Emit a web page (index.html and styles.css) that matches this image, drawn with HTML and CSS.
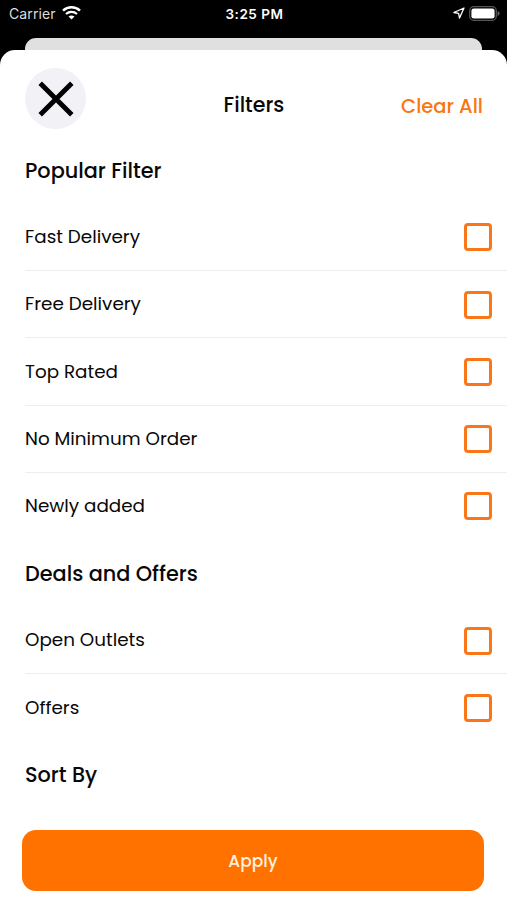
FILE: index.html
```html
<!DOCTYPE html>
<html lang="en">
<head>
<meta charset="utf-8">
<title>Filters</title>
<link rel="stylesheet" href="styles.css">
</head>
<body>
<div class="status">
  <div class="carrier"><span>Carrier</span>
    <svg width="19" height="14" viewBox="0 0 19 14" fill="none" stroke="#fff"><path d="M1 4.600C5.800.2 13.200.2 18 4.600" stroke-width="2.500"/><path d="M4 8c3.100-2.800 7.900-2.800 11 0" stroke-width="2.300"/><path d="M9.500 13.600 6.500 10.600Q9.500 8.200 12.500 10.600Z" fill="#fff" stroke="none"/></svg>
  </div>
  <time>3:25 PM</time>
  <div class="power">
    <svg width="12" height="12" viewBox="0 0 12 12" fill="none" stroke="#fff" stroke-width="1.300" stroke-linejoin="round"><path d="M11 1 .9 5.500l4.700.9.900 4.700Z"/></svg>
    <svg width="31" height="15" viewBox="0 0 31 15"><rect x=".7" y=".7" width="26.600" height="13.600" rx="4" fill="none" stroke="#555" stroke-width="1.300"/><rect x="2.400" y="2.400" width="23.200" height="10.200" rx="2.300" fill="#fff"/><path d="M28.600 5v5q2-.8 2-2.500T28.600 5Z" fill="#666"/></svg>
  </div>
</div>
<div class="back-card"></div>
<main class="sheet">
  <header>
    <button class="close" aria-label="Close"><svg width="36" height="36" viewBox="0 0 36 36"><path d="M2.200 2.200 33.800 33.800M33.800 2.200 2.200 33.800" stroke="#000" stroke-width="4.900"/></svg></button>
    <h1>Filters</h1>
    <button class="clear">Clear All</button>
  </header>
  <section>
    <h2>Popular Filter</h2>
    <label class="row"><span>Fast Delivery</span><i class="box"></i></label>
    <label class="row"><span>Free Delivery</span><i class="box"></i></label>
    <label class="row"><span>Top Rated</span><i class="box"></i></label>
    <label class="row"><span>No Minimum Order</span><i class="box"></i></label>
    <label class="row"><span>Newly added</span><i class="box"></i></label>
  </section>
  <section>
    <h2>Deals and Offers</h2>
    <label class="row"><span>Open Outlets</span><i class="box"></i></label>
    <label class="row"><span>Offers</span><i class="box"></i></label>
  </section>
  <section><h2>Sort By</h2></section>
  <button class="apply">Apply</button>
</main>
</body>
</html>
```
FILE: styles.css
```css
* { box-sizing: border-box; }
body {
  margin: 0;
  height: 900px;
  overflow: hidden;
  background: #000;
  color: #080808;
  font-family: Poppins, Inter, sans-serif;
}
button { border: 0; padding: 0; background: none; font: inherit; }
svg { display: block; }
.status {
  height: 38px;
  padding: 0 7px 10px 9px;
  display: grid;
  grid-template-columns: 1fr auto 1fr;
  align-items: center;
  color: #fff;
  font: 14px/28px Inter, sans-serif;
}
.carrier { display: flex; align-items: center; gap: 6px; color: #ddd; letter-spacing: .1px; }
.carrier svg { margin-top: -2px; }
.status time { font-size: 13.5px; font-weight: 600; letter-spacing: .55px; }
.power { display: flex; align-items: center; justify-content: flex-end; gap: 4px; margin-top: -2px; }
.back-card { height: 12px; margin: 0 25px; background: #e0e0e0; border-radius: 11px 11px 0 0; }
.sheet { height: 850px; background: #fff; border-radius: 15px 15px 0 0; }
header {
  height: 86.8px;
  padding: 18px 24px 0 25px;
  display: grid;
  grid-template-columns: 1fr auto 1fr;
  align-items: start;
}
.close { width: 61px; height: 61px; border-radius: 50%; background: #f1f1f6; display: grid; place-items: center; }
h1 { margin: 22px 0 0; font-size: 20.6px; line-height: 30px; font-weight: 500; }
.clear { margin-top: 24px; justify-self: end; color: #fa7710; font-size: 19.5px; line-height: 30px; font-weight: 500; }
h2 { margin: 0 0 0 25px; height: 67.2px; line-height: 67.2px; font-size: 20.8px; font-weight: 500; }
.row {
  height: 67.2px;
  margin-left: 25px;
  padding: .7px 15px 0 0;
  display: flex;
  align-items: center;
  justify-content: space-between;
  border-bottom: 1.5px solid #eee;
  font-size: 18.35px;
}
.row span { margin-top: -1.4px; }
.row:last-child { border-color: transparent; }
.box { width: 28px; height: 28px; border: 3px solid #f97718; border-radius: 4px; }
.apply {
  display: block;
  width: 462px;
  height: 61px;
  margin: 21.4px 0 0 22px;
  border-radius: 14px;
  background: #ff7200;
  color: #fff0df;
  font-size: 17px;
  font-weight: 500;
}
```
